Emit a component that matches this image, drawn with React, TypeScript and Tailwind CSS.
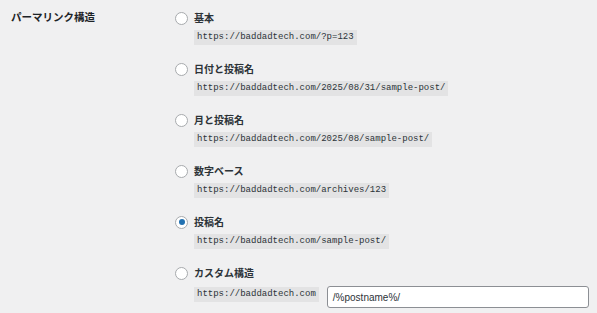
import React from "react";

const options = [
  { label: "基本", code: "https://baddadtech.com/?p=123", checked: false },
  { label: "日付と投稿名", code: "https://baddadtech.com/2025/08/31/sample-post/", checked: false },
  { label: "月と投稿名", code: "https://baddadtech.com/2025/08/sample-post/", checked: false },
  { label: "数字ベース", code: "https://baddadtech.com/archives/123", checked: false },
  { label: "投稿名", code: "https://baddadtech.com/sample-post/", checked: true },
];

const sans = { fontFamily: '"Noto Sans CJK JP", "Noto Sans", "Liberation Sans", sans-serif' };
const mono = { fontFamily: '"Liberation Mono", "DejaVu Sans Mono", monospace' };

function Radio({ checked }: { checked: boolean }) {
  return (
    <span className="flex h-[13px] w-[13px] shrink-0 items-center justify-center rounded-full border border-[#a7aaad] bg-white">
      {checked && <span className="h-[6px] w-[6px] rounded-full bg-[#2271b1]" />}
    </span>
  );
}

function Label({ text, checked }: { text: string; checked: boolean }) {
  return (
    <div className="flex h-[20px] items-center">
      <div className="ml-[175px] flex items-center gap-[6px]">
        <Radio checked={checked} />
        <span className="text-[10px] font-semibold leading-none text-[#2c3338]" style={sans}>
          {text}
        </span>
      </div>
    </div>
  );
}

function Code({ text }: { text: string }) {
  return (
    <code
      className="flex h-[15px] items-center bg-[#e3e3e4] px-[3px] text-[9px] font-normal leading-none text-[#2c3338]"
      style={mono}
    >
      {text}
    </code>
  );
}

export default function App() {
  return (
    <div className="relative h-[313px] w-[597px] overflow-hidden bg-[#f0f0f1]" style={sans}>
      <div className="absolute left-[11px] top-[11px] text-[10.5px] font-bold leading-[12px] text-[#1d2327]">
        パーマリンク構造
      </div>
      <div className="pt-[8px]">
        {options.map((o) => (
          <div key={o.label} className="h-[51px]">
            <Label text={o.label} checked={o.checked} />
            <div className="ml-[194px] mt-[2px] flex">
              <Code text={o.code} />
            </div>
          </div>
        ))}
        <div>
          <Label text="カスタム構造" checked={false} />
          <div className="ml-[194px] mt-[3px] flex items-start gap-[7px]">
            <div className="mt-[1px] flex">
              <Code text="https://baddadtech.com" />
            </div>
            <div className="ml-[1px] flex h-[22px] w-[262px] items-center rounded-[3px] border border-[#8c8f94] bg-white px-[5px] text-[10px] text-[#2c3338]" style={{ fontFamily: '"Liberation Sans", Arial, sans-serif' }}>
              /%postname%/
            </div>
          </div>
        </div>
      </div>
    </div>
  );
}
